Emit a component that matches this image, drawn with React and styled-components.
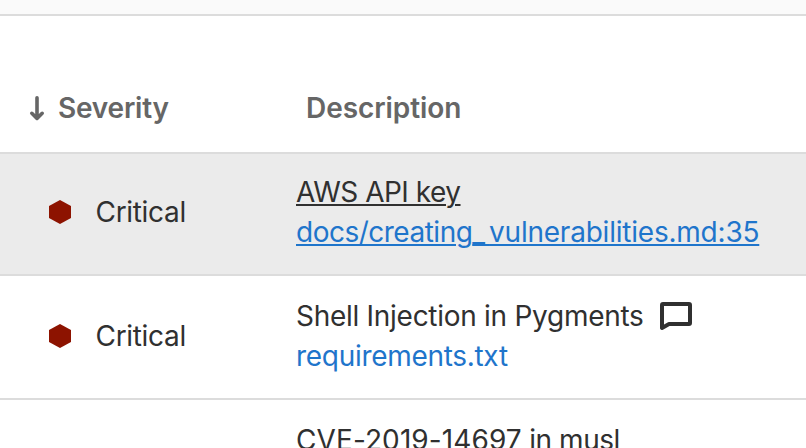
import React from 'react';
import styled, { createGlobalStyle } from 'styled-components';

const Global = createGlobalStyle`
  * { box-sizing: border-box; }
  body { margin: 0; overflow: hidden; background: #fff; }
`;
const Page = styled.main`
  width: 806px; height: 448px; overflow: hidden; background: #fff;
  font: 400 28px/40px Inter, "Liberation Sans", sans-serif; color: #303030;
`;
const TopBar = styled.div`
  height: 16px; background: #fafafa; border-bottom: 2px solid #dcdcdc;
`;
const Columns = styled.div`
  display: grid; grid-template-columns: 296px 1fr; white-space: nowrap;
`;
const Header = styled(Columns)`
  height: 138px; padding-top: 72px; border-bottom: 2px solid #dcdcdc;
  color: #666; font-weight: 600;
`;
const SortCell = styled.div`
  display: flex; padding-left: 28px;
  svg { margin: 7px 12px 0 0; flex: none; }
`;
const HeadCell = styled.div`padding-left: 10px;`;
const Row = styled(Columns)`
  height: ${p => p.$h}px; padding-top: ${p => p.$pad}px; border-bottom: 2px solid #dcdcdc;
  background: ${p => (p.$active ? '#ebebeb' : '#fff')};
`;
const Severity = styled.div`
  display: flex; height: 80px; padding: 20px 0 0 48px;
  svg { margin: 8px 23.5px 0 0; flex: none; }
`;
const Line = styled.div`display: flex; height: 40px;`;
const Label = styled.span`
  letter-spacing: ${p => p.$ls || 0}px;
  text-decoration: ${p => (p.$u ? 'underline' : 'none')};
  text-decoration-thickness: 2px; text-underline-offset: 2px;
`;
const Link = styled(Label)`color: #1f75cb;`;
const Spaced = styled.span`letter-spacing: ${p => p.$ls}px;`;
const CommentIcon = styled.svg`margin: 5px 0 0 15px; flex: none;`;

const Hexagon = () => (
  <svg width="24" height="24" viewBox="0 0 24 24"><path d="M12 0 23 6V18L12 24 1 18V6Z" fill="#8d1300" /></svg>
);
const Critical = () => <Severity><Hexagon /><Label $ls={-0.32}>Critical</Label></Severity>;

export default function App() {
  return (
    <Page>
      <Global />
      <TopBar />
      <Header>
        <SortCell>
          <svg width="18" height="27" viewBox="0 0 18 27" fill="none" stroke="#666" strokeWidth="3.6" strokeLinecap="round" strokeLinejoin="round"><path d="M9 2.8V23.2M3.8 18.3l5.2 5.1 5.2-5.1" /></svg>
          <Label $ls={-0.2}>Severity</Label>
        </SortCell>
        <HeadCell><Label $ls={-0.07}>Description</Label></HeadCell>
      </Header>
      <Row $h={122} $pad={18} $active>
        <Critical />
        <div>
          <Line><Label $u $ls={-0.5}>AWS API key</Label></Line>
          <Line><Link $u $ls={-0.22}><Spaced $ls={-0.5}>docs/creating</Spaced><Spaced $ls={3.9}>_</Spaced>vulnerabilities.md:35</Link></Line>
        </div>
      </Row>
      <Row $h={124} $pad={20}>
        <Critical />
        <div>
          <Line><Label $ls={-0.28}>Shell Injection in Pygments</Label>
            <CommentIcon width="34" height="30" viewBox="0 0 34 30" fill="none" stroke="#303030" strokeWidth="4" strokeLinejoin="round"><path d="M4 3H30Q31 3 31 4V22Q31 23 30 23H10L3 27V4Q3 3 4 3Z" /></CommentIcon>
          </Line>
          <Line><Link $ls={-0.3}>requirements.txt</Link></Line>
        </div>
      </Row>
      <Row $h={124} $pad={20}><div /><Line><Label $ls={-0.45}><Spaced $ls={0.1}>CVE-2019-14697</Spaced> in musl</Label></Line></Row>
    </Page>
  );
}
